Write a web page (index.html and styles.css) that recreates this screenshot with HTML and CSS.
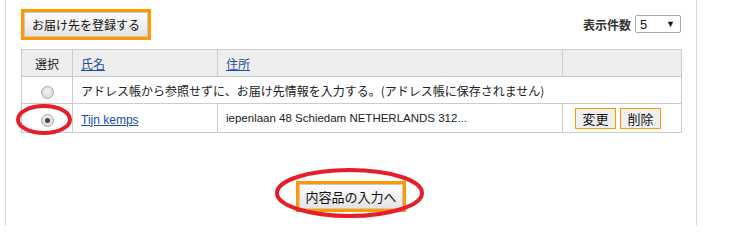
FILE: index.html
```html
<!DOCTYPE html>
<html lang="ja">
<head>
<meta charset="utf-8">
<link rel="stylesheet" href="styles.css">
</head>
<body>
<div class="page">
  <div class="toolbar">
    <button class="btn-main btn-register">お届け先を登録する</button>
    <div class="perpage">
      <span class="perpage-label">表示件数</span>
      <div class="select"><span>5</span><span class="arrow">▼</span></div>
    </div>
  </div>
  <table class="addr">
    <colgroup>
      <col class="w-sel">
      <col class="w-name">
      <col class="w-addr">
      <col class="w-act">
    </colgroup>
    <thead>
      <tr>
        <th class="c-sel">選択</th>
        <th class="c-name"><a href="#">氏名</a></th>
        <th class="c-addr"><a href="#">住所</a></th>
        <th class="c-act"></th>
      </tr>
    </thead>
    <tbody>
      <tr class="row1">
        <td class="c-sel"><span class="radio"></span></td>
        <td colspan="3" class="msg">アドレス帳から参照せずに、お届け先情報を入力する。(アドレス帳に保存されません)</td>
      </tr>
      <tr class="row2">
        <td class="c-sel"><span class="radio checked"></span></td>
        <td class="c-name"><a href="#" class="name">Tijn kemps</a></td>
        <td class="c-addr">iepenlaan 48 Schiedam NETHERLANDS 312...</td>
        <td class="c-act"><button class="btn-small">変更</button><button class="btn-small">削除</button></td>
      </tr>
    </tbody>
  </table>
  <div class="next">
    <button class="btn-main btn-next">内容品の入力へ</button>
  </div>
</div>
<svg class="marks" width="740" height="226" viewBox="0 0 740 226">
  <ellipse cx="44" cy="119.5" rx="26" ry="13.5" fill="none" stroke="#e61e28" stroke-width="4"/>
  <ellipse cx="349.5" cy="193" rx="72.5" ry="23" fill="none" stroke="#e61e28" stroke-width="4"/>
</svg>
</body>
</html>
```
FILE: styles.css
```css
html, body {
  margin: 0;
  padding: 0;
  background: #fff;
}
body {
  font-family: "Noto Sans CJK JP", "Liberation Sans", sans-serif;
  font-size: 12px;
  color: #222;
  width: 740px;
  height: 226px;
  overflow: hidden;
  position: relative;
}
.page {
  margin-left: 5px;
  width: 692px;
  height: 226px;
  border-left: 1px solid #d9d9d9;
  border-right: 1px solid #d9d9d9;
  padding: 9px 15px 0 15px;
  box-sizing: border-box;
}
.toolbar {
  display: flex;
  justify-content: space-between;
  align-items: center;
  height: 31px;
}
.btn-main {
  font-family: "Noto Sans CJK JP", sans-serif;
  color: #111;
  border: 3px solid #ff9900;
  background: linear-gradient(#ffffff, #e2e2e2);
  box-shadow: inset 0 0 0 1px #c8c8c8;
  padding: 0;
  cursor: pointer;
}
.btn-register {
  width: 130px;
  height: 31px;
  font-size: 12px;
}
.perpage {
  display: flex;
  align-items: center;
  gap: 4px;
  margin-top: -1px;
}
.perpage-label {
  font-weight: bold;
  font-size: 12px;
  color: #333;
}
.select {
  width: 46px;
  height: 18px;
  box-sizing: border-box;
  border: 1px solid #a9a9a9;
  border-radius: 2px;
  display: flex;
  justify-content: space-between;
  align-items: center;
  padding: 0 5px 0 4px;
  font-family: "Liberation Sans", sans-serif;
  font-size: 13px;
  color: #111;
}
.select .arrow {
  font-size: 9px;
}
.addr {
  margin-top: 9px;
  width: 660px;
  border-collapse: collapse;
  table-layout: fixed;
}
.w-sel { width: 51px; }
.w-name { width: 145px; }
.w-addr { width: 345px; }
.w-act { width: 119px; }
.addr th, .addr td {
  border: 1px solid #cccccc;
  padding: 0 0 0 8px;
  text-align: left;
  font-weight: normal;
  white-space: nowrap;
  overflow: hidden;
}
.addr th {
  background: #eeeeee;
  height: 26px;
}
.addr th.c-sel, .addr td.c-sel {
  text-align: center;
  padding: 0;
}
.addr a {
  color: #1a4ea8;
  text-decoration: underline;
}
.row1 td { height: 26px; }
.row2 td { height: 28px; }
.addr td.c-addr {
  font-family: "Liberation Sans", "Noto Sans CJK JP", sans-serif;
  font-size: 11.5px;
}
.name {
  font-family: "Liberation Sans", sans-serif;
}
.radio {
  display: inline-block;
  width: 11px;
  height: 11px;
  border-radius: 50%;
  border: 1px solid #a8a8a8;
  background: radial-gradient(circle at 50% 40%, #f4f4f4, #d4d4d4);
  vertical-align: middle;
  position: relative;
}
.radio.checked::after {
  content: "";
  position: absolute;
  left: 3px;
  top: 3px;
  width: 5px;
  height: 5px;
  border-radius: 50%;
  background: #444;
}
.addr td.c-act {
  padding: 0 0 0 12px;
}
.btn-small {
  font-family: "Noto Sans CJK JP", sans-serif;
  font-size: 13px;
  color: #111;
  background: #f0f0f0;
  border: 1px solid #ff9900;
  width: 41px;
  height: 21px;
  padding: 0;
  margin: 0 4px 0 0;
  line-height: 19px;
  vertical-align: middle;
}
.next {
  display: flex;
  justify-content: center;
  width: 660px;
  margin-top: 48px;
}
.btn-next {
  width: 110px;
  height: 31px;
  font-size: 13px;
}
.marks {
  position: absolute;
  left: 0;
  top: 0;
  pointer-events: none;
}
```
